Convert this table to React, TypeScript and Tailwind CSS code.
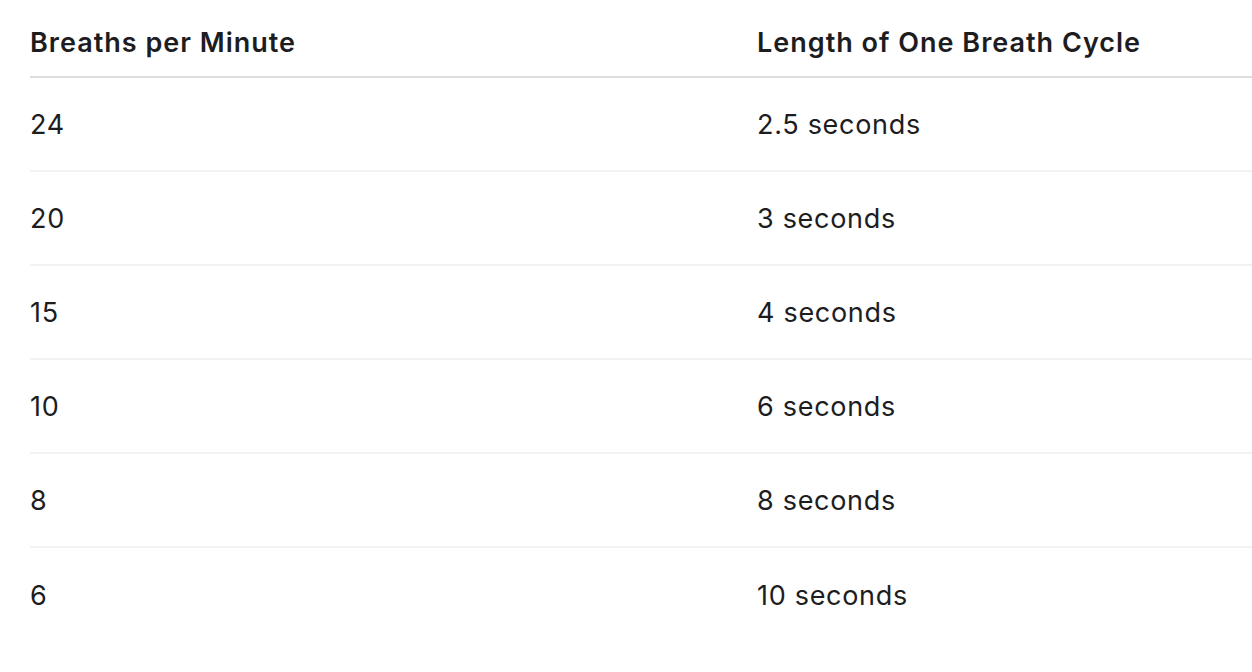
import React from "react";

const rows = [
  ["24", "2.5 seconds"],
  ["20", "3 seconds"],
  ["15", "4 seconds"],
  ["10", "6 seconds"],
  ["8", "8 seconds"],
  ["6", "10 seconds"],
];

const App = () => {
  return (
    <div className="w-[1252px] h-[672px] overflow-hidden bg-white pl-[30px] font-['Inter',sans-serif] text-[#1d1d1f]">
      <div className="w-[1454px]">
        <div className="grid grid-cols-2 h-[78px] items-center border-b-2 border-[#dedede] pt-[11px] text-[27px] font-semibold tracking-[1px]">
          <div>Breaths per Minute</div>
          <div>Length of One Breath Cycle</div>
        </div>
        {rows.map(([bpm, len], i) => (
          <div
            key={bpm}
            className={
              "grid grid-cols-2 h-[94px] items-center pt-[2px] text-[27px] tracking-[0.7px] " +
              (i < rows.length - 1 ? "border-b-2 border-[#f2f2f2]" : "")
            }
          >
            <div>{bpm}</div>
            <div>{len}</div>
          </div>
        ))}
      </div>
    </div>
  );
};

export default App;
